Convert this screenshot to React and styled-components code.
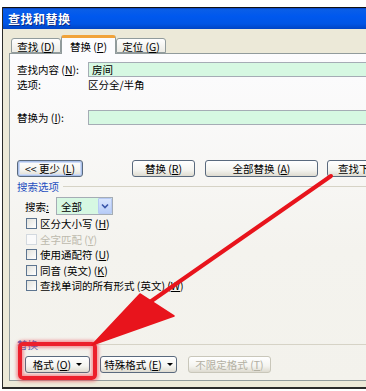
import React from 'react'
import styled, { createGlobalStyle } from 'styled-components'

const GlobalStyle = createGlobalStyle`
  html, body { margin:0; padding:0; background:#fff; }
  body {
    font-family: "Noto Sans CJK SC", "Liberation Sans", sans-serif;
    font-size:10.5px;
    line-height:13px;
    color:#000;
  }
`

const Page = styled.div`
  position:relative;
  width:366px;
  height:391px;
  overflow:hidden;
  background:#fff;
  padding:7px 0 0 2px;
  box-sizing:border-box;
`

const Window = styled.div`
  width:430px;
  background:#ece9d8;
  border-left:1px solid #2a2a2a;
  border-bottom:2px solid #2a2a2a;
`

const TitleBar = styled.div`
  height:22px;
  display:flex;
  align-items:center;
  padding-left:5px;
  background:linear-gradient(#0a3fb8 0, #0a5ee8 8%, #0058ee 40%, #0055e5 75%, #0044c4 100%);
  border-top:1px solid #111;
  box-sizing:border-box;
  color:#fff;
  font-weight:bold;
  font-size:12px;
  letter-spacing:0.5px;
  text-shadow:1px 1px 0 #0a2a80;
`

const Body = styled.div`
  padding:6px 0 6px 6px;
`

const Tabs = styled.div`
  display:flex;
  align-items:flex-end;
  height:18px;
  padding-left:2px;
`

const Tab = styled.div`
  position:relative;
  z-index:${p => (p.$active ? 2 : 1)};
  height:${p => (p.$active ? 19 : 15)}px;
  margin-bottom:${p => (p.$active ? -1 : 0)}px;
  width:${p => p.$w}px;
  box-sizing:border-box;
  display:flex;
  align-items:center;
  justify-content:center;
  white-space:pre;
  border:1px solid #919b9c;
  border-bottom:${p => (p.$active ? 'none' : '1px solid #919b9c')};
  border-top:${p => (p.$active ? '3px solid #f1a33a' : '1px solid #919b9c')};
  border-radius:3px 3px 0 0;
  background:${p => (p.$active ? '#fcfcfe' : 'linear-gradient(#fff, #ecebe5)')};
  padding-top:${p => (p.$active ? 0 : 1)}px;
`

const Panel = styled.div`
  height:328px;
  box-sizing:border-box;
  border:1px solid #919b9c;
  background:linear-gradient(#fcfcfe, #f4f3ee 60%, #f3f2ec);
  padding:0 0 0 7px;
  display:flex;
  flex-direction:column;
`

const FieldRow = styled.div`
  display:flex;
  align-items:center;
  height:${p => p.$h || 15}px;
  margin-top:${p => p.$mt || 0}px;
`

const Label = styled.div`
  width:71px;
  white-space:pre;
`

const Input = styled.div`
  flex:1;
  height:15px;
  box-sizing:border-box;
  border:1px solid #a5acb5;
  background:#d6f8e2;
  padding-left:3px;
  line-height:13px;
`

const ButtonRow = styled.div`
  display:flex;
  align-items:center;
  margin-top:${p => p.$mt}px;
  padding-left:${p => p.$pl || 0}px;
`

const Button = styled.div`
  width:${p => p.$w}px;
  height:17px;
  margin-left:${p => p.$ml || 0}px;
  flex-shrink:0;
  box-sizing:border-box;
  display:flex;
  align-items:center;
  justify-content:center;
  white-space:pre;
  border:1px solid ${p => (p.$disabled ? '#c9c7ba' : '#5a6a7e')};
  border-radius:3px;
  background:linear-gradient(#ffffff, #f4f4f0 60%, #dedbd0);
  color:${p => (p.$disabled ? '#b3b0a2' : '#000')};
  box-shadow:${p => (p.$focus ? 'inset 0 0 0 1px #aac0ea, inset 0 0 0 2px #cfdcf5' : 'none')};
`

const Caret = styled.span`
  width:0;
  height:0;
  margin-left:5px;
  border-left:3px solid transparent;
  border-right:3px solid transparent;
  border-top:3px solid #000;
`

const GroupHead = styled.div`
  display:flex;
  align-items:center;
  height:12px;
  margin-top:${p => p.$mt}px;
  color:#1f4fbf;
  &::after {
    content:"";
    flex:1;
    height:1px;
    margin-left:4px;
    background:#d6d3c6;
  }
`

const SearchRow = styled.div`
  display:flex;
  align-items:center;
  height:18px;
  margin-top:5px;
  padding-left:8px;
`

const Select = styled.div`
  margin-left:7px;
  width:57px;
  height:18px;
  box-sizing:border-box;
  border:1px solid #a5acb5;
  background:#d6f8e2;
  display:flex;
  align-items:center;
  padding-left:4px;
`

const SelectText = styled.span`
  flex:1;
`

const DropBtn = styled.div`
  width:14px;
  height:16px;
  box-sizing:border-box;
  border:1px solid #b6c9f3;
  border-radius:1px;
  background:linear-gradient(#d9e5fd, #b8cdf8);
  display:flex;
  align-items:center;
  justify-content:center;
`

const CheckList = styled.div`
  display:flex;
  flex-direction:column;
  padding-left:9px;
  margin-top:1px;
`

const CheckRow = styled.div`
  display:flex;
  align-items:center;
  height:15.5px;
  color:${p => (p.$disabled ? '#bdbaad' : '#000')};
  white-space:pre;
`

const Box = styled.span`
  width:11px;
  height:11px;
  box-sizing:border-box;
  border:1px solid ${p => (p.$disabled ? '#d3d9df' : '#5d7590')};
  background:${p => (p.$disabled ? '#fafafa' : 'linear-gradient(135deg, #e2e2dc, #fff)')};
  margin-right:3px;
  flex-shrink:0;
`

const U = styled.u`
  text-underline-offset:1px;
`

const RedBox = styled.div`
  position:absolute;
  left:18px;
  top:342px;
  width:79px;
  height:38px;
  box-sizing:border-box;
  border:4px solid #ec1f2c;
  border-radius:5px;
  box-shadow:0 0 3px 2px rgba(240,90,100,0.55), inset 0 0 3px 2px rgba(240,90,100,0.55);
  pointer-events:none;
`

const Overlay = styled.svg`
  position:absolute;
  left:0;
  top:0;
  pointer-events:none;
`

export default function App() {
  return (
    <Page>
      <GlobalStyle />
      <Window>
        <TitleBar>查找和替换</TitleBar>
        <Body>
          <Tabs>
            <Tab $w={50}>查找 (<U>D</U>)</Tab>
            <Tab $w={55} $active>替换 (<U>P</U>)</Tab>
            <Tab $w={50}>定位 (<U>G</U>)</Tab>
          </Tabs>
          <Panel>
            <FieldRow $mt={8}>
              <Label>查找内容 (<U>N</U>):</Label>
              <Input>房间</Input>
            </FieldRow>
            <FieldRow $h={14}>
              <Label>选项:</Label>
              <div>区分全/半角</div>
            </FieldRow>
            <FieldRow $mt={19}>
              <Label>替换为 (<U>I</U>):</Label>
              <Input />
            </FieldRow>
            <ButtonRow $mt={35}>
              <Button $w={66} $focus>&lt;&lt; 更少 (<U>L</U>)</Button>
              <Button $w={63} $ml={49}>替换 (<U>R</U>)</Button>
              <Button $w={113} $ml={10}>全部替换 (<U>A</U>)</Button>
              <Button $w={90} $ml={9}>查找下一处 (<U>F</U>)</Button>
            </ButtonRow>
            <GroupHead $mt={3}>搜索选项</GroupHead>
            <SearchRow>
              <span>搜索<U>:</U></span>
              <Select>
                <SelectText>全部</SelectText>
                <DropBtn>
                  <svg width="8" height="6" viewBox="0 0 8 6">
                    <path d="M1 1.5 L4 4.5 L7 1.5" fill="none" stroke="#3a55a8" strokeWidth="1.6" />
                  </svg>
                </DropBtn>
              </Select>
            </SearchRow>
            <CheckList>
              <CheckRow><Box />区分大小写 (<U>H</U>)</CheckRow>
              <CheckRow $disabled><Box $disabled />全字匹配 (<U>Y</U>)</CheckRow>
              <CheckRow><Box />使用通配符 (<U>U</U>)</CheckRow>
              <CheckRow><Box />同音 (英文) (<U>K</U>)</CheckRow>
              <CheckRow><Box />查找单词的所有形式 (英文) (<U>W</U>)</CheckRow>
            </CheckList>
            <GroupHead $mt={45}>替换</GroupHead>
            <ButtonRow $mt={5} $pl={8}>
              <Button $w={65}>格式 (<U>O</U>)<Caret /></Button>
              <Button $w={77} $ml={10}>特殊格式 (<U>E</U>)<Caret /></Button>
              <Button $w={83} $ml={11} $disabled>不限定格式 (<U>T</U>)</Button>
            </ButtonRow>
          </Panel>
        </Body>
      </Window>
      <RedBox />
      <Overlay width="366" height="391" viewBox="0 0 366 391">
        <line x1="331" y1="176" x2="150" y2="302" stroke="#e8141c" strokeWidth="4" strokeLinecap="round" />
        <polygon points="92,345 140,294 174,316" fill="#e8141c" stroke="#e8141c" strokeWidth="1.5" strokeLinejoin="round" />
      </Overlay>
    </Page>
  )
}
